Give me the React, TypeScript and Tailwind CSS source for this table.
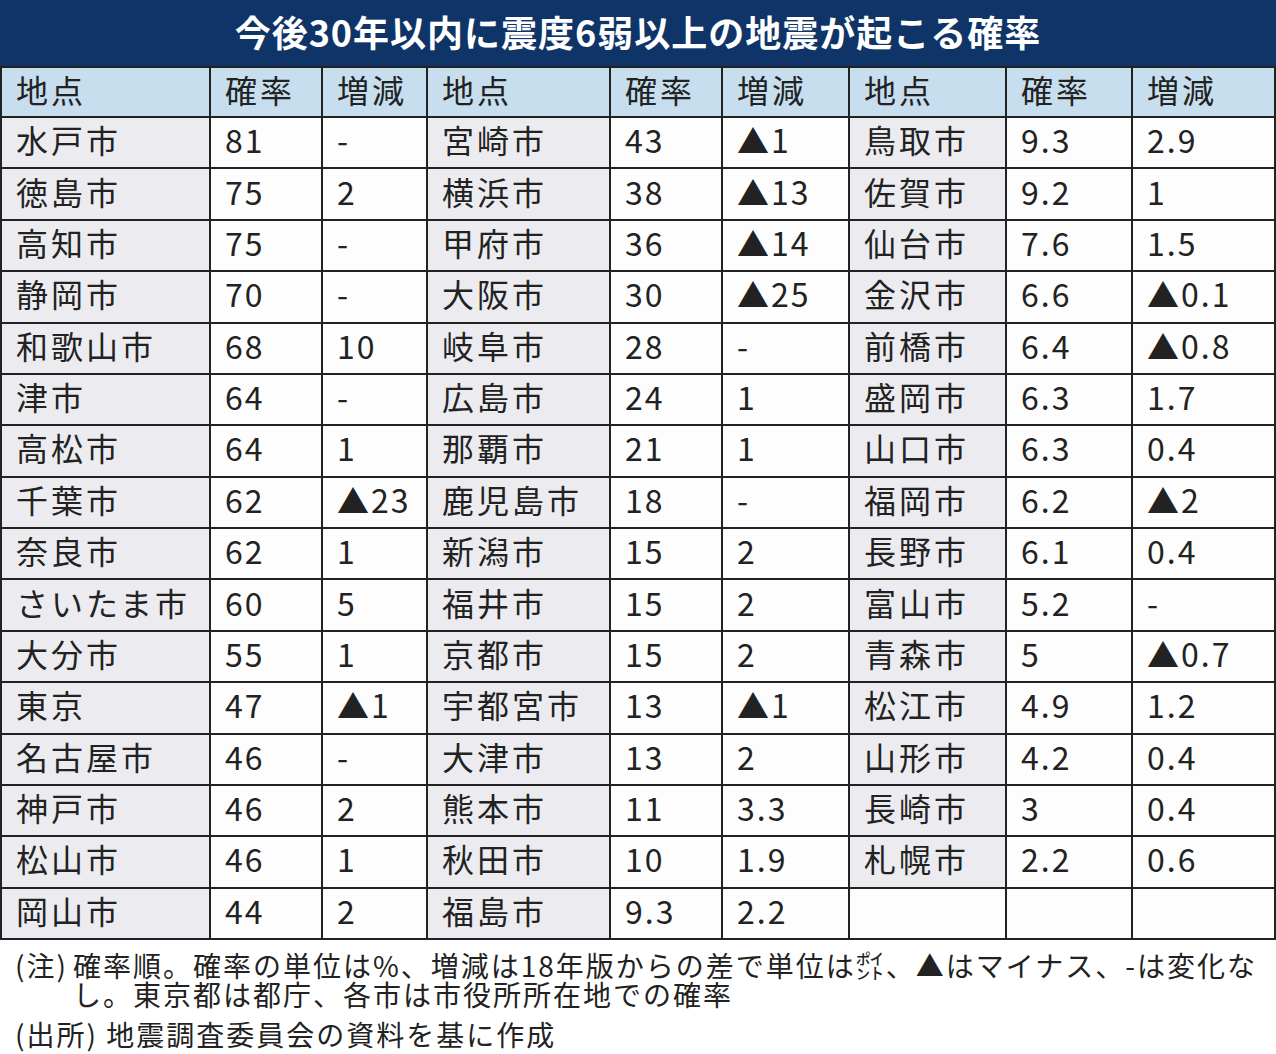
import React from "react";

type Row = [string, string, string];

const g1: Row[] = [
  ["水戸市", "81", "-"],
  ["徳島市", "75", "2"],
  ["高知市", "75", "-"],
  ["静岡市", "70", "-"],
  ["和歌山市", "68", "10"],
  ["津市", "64", "-"],
  ["高松市", "64", "1"],
  ["千葉市", "62", "▲23"],
  ["奈良市", "62", "1"],
  ["さいたま市", "60", "5"],
  ["大分市", "55", "1"],
  ["東京", "47", "▲1"],
  ["名古屋市", "46", "-"],
  ["神戸市", "46", "2"],
  ["松山市", "46", "1"],
  ["岡山市", "44", "2"],
];

const g2: Row[] = [
  ["宮崎市", "43", "▲1"],
  ["横浜市", "38", "▲13"],
  ["甲府市", "36", "▲14"],
  ["大阪市", "30", "▲25"],
  ["岐阜市", "28", "-"],
  ["広島市", "24", "1"],
  ["那覇市", "21", "1"],
  ["鹿児島市", "18", "-"],
  ["新潟市", "15", "2"],
  ["福井市", "15", "2"],
  ["京都市", "15", "2"],
  ["宇都宮市", "13", "▲1"],
  ["大津市", "13", "2"],
  ["熊本市", "11", "3.3"],
  ["秋田市", "10", "1.9"],
  ["福島市", "9.3", "2.2"],
];

const g3: Row[] = [
  ["鳥取市", "9.3", "2.9"],
  ["佐賀市", "9.2", "1"],
  ["仙台市", "7.6", "1.5"],
  ["金沢市", "6.6", "▲0.1"],
  ["前橋市", "6.4", "▲0.8"],
  ["盛岡市", "6.3", "1.7"],
  ["山口市", "6.3", "0.4"],
  ["福岡市", "6.2", "▲2"],
  ["長野市", "6.1", "0.4"],
  ["富山市", "5.2", "-"],
  ["青森市", "5", "▲0.7"],
  ["松江市", "4.9", "1.2"],
  ["山形市", "4.2", "0.4"],
  ["長崎市", "3", "0.4"],
  ["札幌市", "2.2", "0.6"],
  ["", "", ""],
];

function Cell({ text, kind }: { text: string; kind: "loc" | "num" | "head" | "empty" }) {
  const bg =
    kind === "head"
      ? "bg-[#c7deee]"
      : kind === "loc"
      ? "bg-[#ececf0]"
      : "bg-[#fdfdfd]";
  const track = kind === "num" ? "tracking-[2px]" : "tracking-[3px]";
  return (
    <div className={`${bg} ${track} flex items-center pl-[14px] pb-[7px] whitespace-nowrap`}>
      {text}
    </div>
  );
}

export default function App() {
  const heads = ["地点", "確率", "増減", "地点", "確率", "増減", "地点", "確率", "増減"];
  const cells: React.ReactNode[] = [];
  heads.forEach((h, i) => cells.push(<Cell key={`h${i}`} text={h} kind="head" />));
  for (let r = 0; r < 16; r++) {
    [g1, g2, g3].forEach((g, gi) => {
      const row = g[r];
      const empty = row[0] === "";
      cells.push(<Cell key={`${r}-${gi}-0`} text={row[0]} kind={empty ? "empty" : "loc"} />);
      cells.push(<Cell key={`${r}-${gi}-1`} text={row[1]} kind="num" />);
      cells.push(<Cell key={`${r}-${gi}-2`} text={row[2]} kind="num" />);
    });
  }

  return (
    <div className="w-[1276px] h-[1054px] bg-white overflow-hidden font-['Noto_Sans_CJK_JP',sans-serif] text-[#222]">
      <div className="h-[66px] bg-[#0f3568] flex items-center justify-center">
        <h1 className="text-white text-[36px] font-bold tracking-[1px] leading-none pb-[5px]">
          今後30年以内に震度6弱以上の地震が起こる確率
        </h1>
      </div>
      <div className="h-[874px] bg-[#222] p-[2px] gap-[2px] grid grid-cols-[207px_110px_103px_181px_110px_125px_155px_124px_141px] grid-rows-[48px_repeat(16,1fr)] text-[32px] leading-none">
        {cells}
      </div>
      <div className="pl-[15px] pt-[11px] text-[28px] leading-[29px] tracking-[2px] text-[#222]">
        <div className="flex whitespace-nowrap">
          <span className="w-[58px] shrink-0">(注)</span>
          <div>
            <div>確率順。確率の単位は%、増減は18年版からの差で単位は㌽、▲はマイナス、-は変化な</div>
            <div>し。東京都は都庁、各市は市役所所在地での確率</div>
          </div>
        </div>
        <div className="mt-[11px] whitespace-nowrap">(出所) 地震調査委員会の資料を基に作成</div>
      </div>
    </div>
  );
}
